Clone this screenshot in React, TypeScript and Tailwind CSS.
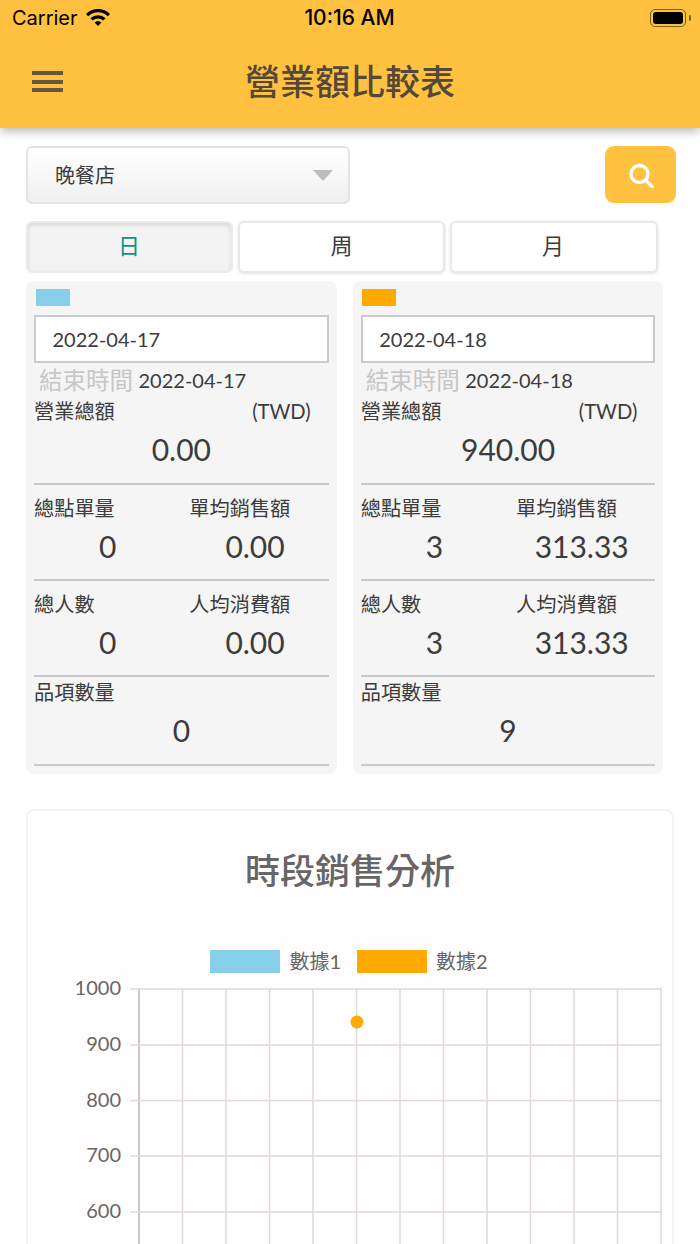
const FONT = "font-['Lato','Noto_Sans_CJK_TC',sans-serif]";

interface CompareCardProps {
  color: string;
  date: string;
  total: string;
  orders: string;
  avgOrder: string;
  people: string;
  avgPerson: string;
  items: string;
}

function Divider() {
  return <div className="h-[2px] bg-[#c9c9c9]" />;
}

function PairRow({ left, leftValue, right, rightValue }: { left: string; leftValue: string; right: string; rightValue: string }) {
  return (
    <div className="grid h-[94px] grid-cols-2 grid-rows-[auto_1fr]">
      <div className="mt-[11px] h-[24px] text-[20.2px] leading-[24px]">{left}</div>
      <div className="mt-[11px] h-[24px] pl-[8px] text-[20.2px] leading-[24px]">{right}</div>
      <div className="mt-[8px] text-center text-[30px] leading-[36px]">{leftValue}</div>
      <div className="mt-[8px] text-center text-[30px] leading-[36px]">{rightValue}</div>
    </div>
  );
}

function CompareCard({ color, date, total, orders, avgOrder, people, avgPerson, items }: CompareCardProps) {
  return (
    <div className="h-[493px] w-[310.7px] rounded-[8px] bg-[#f5f5f5] px-[8px] pt-[8px] text-[#3c3c3c]">
      <div className={`ml-[1.7px] h-[17px] w-[34px] ${color}`} />
      <div className="mt-[9px] flex h-[48px] items-center border-2 border-[#cbcbcb] bg-white pl-[16.5px] text-[20px]">{date}</div>
      <div className="mt-[4px] flex h-[26px] items-center pl-[5px] leading-[26px]">
        <span className="text-[23.5px] text-[#c6c6c6]">結束時間</span>
        <span className="ml-[5.5px] text-[20px]">{date}</span>
      </div>
      <div className="mt-[6px] flex h-[24px] justify-between pr-[18px] text-[20.2px] leading-[24px]">
        <span>營業總額</span>
        <span>(TWD)</span>
      </div>
      <div className="mt-[8px] h-[36px] text-center text-[30px] leading-[36px]">{total}</div>
      <div className="mt-[16px]">
        <Divider />
      </div>
      <PairRow left="總點單量" leftValue={orders} right="單均銷售額" rightValue={avgOrder} />
      <Divider />
      <PairRow left="總人數" leftValue={people} right="人均消費額" rightValue={avgPerson} />
      <Divider />
      <div className="mt-[3px] h-[24px] text-[20.2px] leading-[24px]">品項數量</div>
      <div className="mt-[8px] h-[36px] text-center text-[30px] leading-[36px]">{items}</div>
      <div className="mt-[16px]">
        <Divider />
      </div>
    </div>
  );
}

function Chart() {
  const xs = Array.from({ length: 13 }, (_, i) => 111 + i * 43.5);
  const rows = [
    { y: 14, label: "1000" },
    { y: 70, label: "900" },
    { y: 125.5, label: "800" },
    { y: 181, label: "700" },
    { y: 237, label: "600" },
  ];
  return (
    <svg width="644" height="280" viewBox="0 0 644 280" className="block">
      {xs.map((x, i) => (
        <line key={x} x1={x} x2={x} y1="14" y2="280" stroke={i === 0 ? "#c8c8c8" : "#dcd9db"} strokeWidth={i === 0 ? 2 : 1.5} />
      ))}
      {rows.map((r) => (
        <g key={r.label}>
          <line x1="102" x2="634" y1={r.y} y2={r.y} stroke="#dcd9db" strokeWidth="1.5" />
          <text x="93" y={r.y + 6} textAnchor="end" fontSize="20" fill="#666666">
            {r.label}
          </text>
        </g>
      ))}
      <circle cx="329" cy="47" r="6.5" fill="#ffaa00" />
    </svg>
  );
}

export default function App() {
  return (
    <div className={`h-[1244px] w-[700px] overflow-hidden bg-white ${FONT}`}>
      {/* Header */}
      <header className="relative z-10 h-[128px] bg-[#ffc13f] shadow-[0_3px_10px_rgba(0,0,0,0.3)]">
        <div className="flex h-[36px] items-center justify-between pl-[12px] pr-[9px] font-['Inter',sans-serif] text-[20px] text-black">
          <div className="flex w-[200px] items-center gap-[7px]">
            <span>Carrier</span>
            <svg width="26" height="19" viewBox="0 2 26 18" className="mb-[2px]">
              <path d="M1 7.5a17 17 0 0 1 24 0l-2.2 2.3a14 14 0 0 0-19.6 0z" fill="#000" />
              <path d="M5.4 11.8a11 11 0 0 1 15.2 0l-2.3 2.3a8 8 0 0 0-10.6 0z" fill="#000" />
              <path d="M9.6 16a5 5 0 0 1 6.8 0L13 19.5z" fill="#000" />
            </svg>
          </div>
          <span className="mr-[4px] text-[21px] font-medium">10:16 AM</span>
          <div className="flex w-[200px] items-center justify-end">
            <div className="flex h-[18px] w-[36px] items-center rounded-[5px] border border-[#7a5f20] p-[2px]">
              <div className="h-full w-full rounded-[3px] bg-black" />
            </div>
            <div className="ml-[3px] h-[6px] w-[2px] rounded-r-sm bg-[#7a5f20]" />
          </div>
        </div>
        <div className="relative flex h-[92px] items-center justify-center pb-[2px]">
          <div className="absolute left-[32px] top-[35px] flex h-[21px] w-[31px] flex-col justify-between">
            <div className="h-[4px] bg-[#64563f]" />
            <div className="h-[4px] bg-[#64563f]" />
            <div className="h-[4px] bg-[#64563f]" />
          </div>
          <h1 className="text-[35px] font-medium leading-none text-[#54483a]">營業額比較表</h1>
        </div>
      </header>

      {/* Filters */}
      <div className="ml-[26px] mr-[24px] mt-[18px] flex items-start justify-between">
        <div className="flex h-[58px] w-[324px] items-center justify-between rounded-[6px] border-2 border-[#e3e3e3] bg-gradient-to-b from-white to-[#f0f0f0] pl-[27px] pr-[15px] text-[20px] text-[#3c3c3c]">
          <span>晚餐店</span>
          <div className="h-0 w-0 border-x-[10px] border-t-[11px] border-x-transparent border-t-[#bdbdbd]" />
        </div>
        <button className="flex h-[57px] w-[71px] items-center justify-center rounded-[9px] bg-[#ffc13f]">
          <svg width="26" height="26" viewBox="0 0 26 26" fill="none" stroke="#ffffff">
            <circle cx="11.5" cy="12" r="8.5" strokeWidth="3.4" />
            <line x1="17.5" y1="18" x2="24" y2="24.5" strokeWidth="3.4" strokeLinecap="round" />
          </svg>
        </button>
      </div>

      {/* Tabs */}
      <div className="ml-[26px] mt-[17px] flex gap-[5px] text-[22px] leading-none">
        <div className="flex h-[52px] w-[207px] items-center justify-center rounded-[6px] border-2 border-[#ebebeb] bg-[#f3f3f3] pb-[2px] pr-px text-[#0d9488] shadow-[inset_0_2px_4px_rgba(0,0,0,0.12)]">日</div>
        <div className="flex h-[52px] w-[207px] items-center justify-center rounded-[6px] border-2 border-[#e8e8e8] bg-white pb-[2px] text-[#3c3c3c] shadow-[0_1px_3px_rgba(0,0,0,0.12)]">周</div>
        <div className="flex h-[52px] w-[208px] items-center justify-center rounded-[6px] border-2 border-[#e8e8e8] bg-white pb-[2px] pr-[2px] text-[#3c3c3c] shadow-[0_1px_3px_rgba(0,0,0,0.12)]">月</div>
      </div>

      {/* Compare cards */}
      <div className="ml-[26px] mt-[8px] flex gap-[16px]">
        <CompareCard color="bg-[#87ceeb]" date="2022-04-17" total="0.00" orders="0" avgOrder="0.00" people="0" avgPerson="0.00" items="0" />
        <CompareCard color="bg-[#ffaa00]" date="2022-04-18" total="940.00" orders="3" avgOrder="313.33" people="3" avgPerson="313.33" items="9" />
      </div>

      {/* Hourly chart */}
      <div className="ml-[26px] mt-[35px] h-[500px] w-[648px] rounded-[8px] border-2 border-[#f5f3f4] bg-[#fffdfe]">
        <h2 className="mt-[39px] text-center text-[35px] font-medium leading-[40px] text-[#666666]">時段銷售分析</h2>
        <div className="mt-[60px] flex h-[23px] items-center justify-center gap-[9px] pr-[2px] text-[20px] leading-none text-[#666666]">
          <div className="h-[23px] w-[70px] bg-[#87ceeb]" />
          <span className="mb-[2px]">數據1</span>
          <div className="ml-[7px] h-[23px] w-[70px] bg-[#ffaa00]" />
          <span className="mb-[2px]">數據2</span>
        </div>
        <div className="mt-[2px]">
          <Chart />
        </div>
      </div>
    </div>
  );
}
